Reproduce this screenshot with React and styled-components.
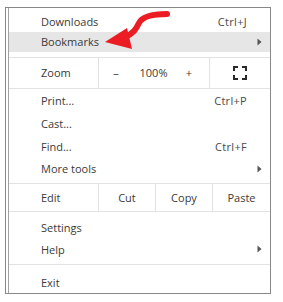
import React from "react";
import styled, { createGlobalStyle } from "styled-components";

const Global = createGlobalStyle`
  html, body { margin: 0; padding: 0; background: #ffffff; }
  body { width: 283px; height: 302px; overflow: hidden; position: relative; }
`;

const Frame = styled.div`
  margin: 7px 0 0 5px;
  width: 264px;
  height: 285px;
  border: 1px solid #888888;
  background: #fff;
  display: flex;
`;

const Menu = styled.div`
  margin-left: 2px;
  flex: 1;
  border-left: 1px solid #a2a2a2;
  display: flex;
  flex-direction: column;
  padding-top: 4px;
  font-family: "Open Sans", "Noto Sans", Arial, sans-serif;
  font-size: 11px;
  color: #3a3a3a;
`;

const Row = styled.div`
  height: ${(p) => p.$h || 22}px;
  display: flex;
  align-items: center;
  padding-left: 32px;
  padding-right: ${(p) => (p.$sub ? 8 : 23)}px;
  margin-top: ${(p) => p.$mt || 0}px;
  background: ${(p) => (p.$hover ? "#e6e6e6" : "transparent")};
`;

const Label = styled.span`
  flex: 1;
`;

const Shortcut = styled.span`
  color: #4a4a4a;
  letter-spacing: 0.3px;
`;

const Separator = styled.div`
  height: 1px;
  background: #e2e2e2;
  margin-top: ${(p) => p.$mt || 0}px;
`;

const SplitRow = styled.div`
  display: grid;
  grid-template-columns: ${(p) => p.$cols};
  height: ${(p) => p.$h}px;
  border-bottom: 1px solid #e2e2e2;
`;

const Cell = styled.div`
  display: flex;
  align-items: center;
  justify-content: ${(p) => (p.$left ? "flex-start" : "center")};
  padding-left: ${(p) => (p.$left ? 32 : 0)}px;
  border-left: ${(p) => (p.$line ? "1px solid #e2e2e2" : "none")};
`;

const ZoomControls = styled.div`
  display: grid;
  grid-template-columns: 34px 41px 30px;
  align-items: center;
  border-left: 1px solid #e2e2e2;
`;

const ZoomItem = styled.span`
  text-align: center;
`;

const Overlay = styled.svg`
  position: absolute;
  left: 0;
  top: 0;
  pointer-events: none;
`;

const SubArrow = () => (
  <svg width="5" height="8" viewBox="0 0 5 8">
    <path d="M0.5 0.5 L4.5 4 L0.5 7.5 Z" fill="#555" />
  </svg>
);

const FullscreenIcon = () => (
  <svg width="14" height="14" viewBox="0 0 14 14" fill="none" stroke="#2a2a2a" strokeWidth="2">
    <path d="M1 5 V1 H5" />
    <path d="M9 1 H13 V5" />
    <path d="M13 9 V13 H9" />
    <path d="M5 13 H1 V9" />
  </svg>
);

export default function App() {
  return (
    <>
      <Global />
      <Frame>
        <Menu>
          <Row $h={20}>
            <Label>Downloads</Label>
            <Shortcut>Ctrl+J</Shortcut>
          </Row>
          <Row $h={20} $hover $sub>
            <Label>Bookmarks</Label>
            <SubArrow />
          </Row>
          <Separator $mt={5} />
          <SplitRow $cols="89px 111px 1fr" $h={30}>
            <Cell $left>Zoom</Cell>
            <ZoomControls>
              <ZoomItem>–</ZoomItem>
              <ZoomItem>100%</ZoomItem>
              <ZoomItem>+</ZoomItem>
            </ZoomControls>
            <Cell $line>
              <FullscreenIcon />
            </Cell>
          </SplitRow>
          <Row $h={23}>
            <Label>Print...</Label>
            <Shortcut>Ctrl+P</Shortcut>
          </Row>
          <Row $h={23}>
            <Label>Cast...</Label>
          </Row>
          <Row $h={23}>
            <Label>Find...</Label>
            <Shortcut>Ctrl+F</Shortcut>
          </Row>
          <Row $h={23} $sub>
            <Label>More tools</Label>
            <SubArrow />
          </Row>
          <Separator $mt={3} />
          <SplitRow $cols="89px 57px 57px 1fr" $h={27}>
            <Cell $left>Edit</Cell>
            <Cell $line>Cut</Cell>
            <Cell $line>Copy</Cell>
            <Cell $line>Paste</Cell>
          </SplitRow>
          <Row $mt={4}>
            <Label>Settings</Label>
          </Row>
          <Row $sub>
            <Label>Help</Label>
            <SubArrow />
          </Row>
          <Separator $mt={4} />
          <Row $mt={6}>
            <Label>Exit</Label>
          </Row>
        </Menu>
      </Frame>
      <Overlay width="283" height="80" viewBox="0 0 283 80">
        <path
          d="M167 14 C153 14 142 17 139 23 C136 29 134 33 125 37"
          stroke="#ec1c24"
          strokeWidth="6"
          fill="none"
          strokeLinecap="round"
        />
        <path d="M105 42 L127 28 L132 49 Z" fill="#ec1c24" />
      </Overlay>
    </>
  );
}
